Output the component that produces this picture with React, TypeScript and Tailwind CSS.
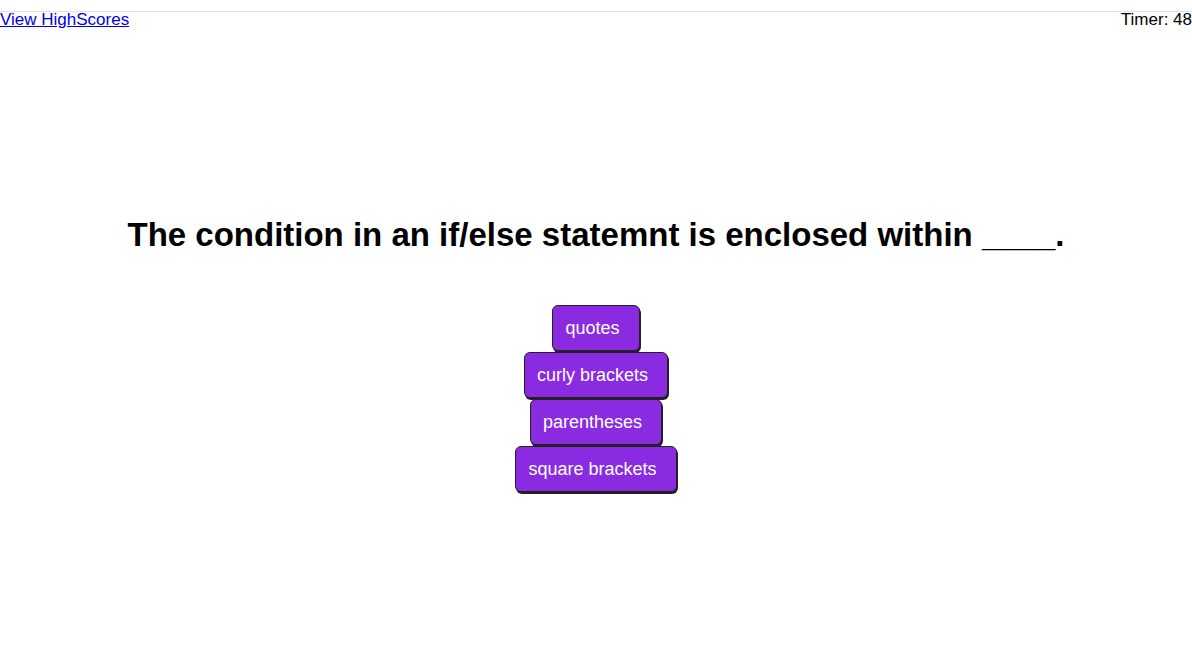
import React from "react";

const answers = ["quotes", "curly brackets", "parentheses", "square brackets"];

export default function App() {
  return (
    <div className="min-h-[668px] bg-white font-['Liberation_Sans',Arial,sans-serif] text-black">
      <div className="h-[12px] border-b border-[#e3e3e3]" />
      <div className="flex justify-between text-[17px] leading-[16px]">
        <a href="#" className="text-[#0000ee] underline">View HighScores</a>
        <span>Timer: 48</span>
      </div>
      <div className="flex flex-col items-center pt-[188px]">
        <h1 className="text-[33px] font-bold leading-[38px]">
          The condition in an if/else statemnt is enclosed within ____.
        </h1>
        <div className="mt-[51px] flex flex-col items-center gap-[1px]">
          {answers.map((a) => (
            <button
              key={a}
              className="h-[46px] rounded-[6px] border border-[#222] bg-[#8a2be2] pl-[12px] pr-[19px] text-[18px] text-white shadow-[1px_2px_0_#222]"
            >
              {a}
            </button>
          ))}
        </div>
      </div>
    </div>
  );
}
